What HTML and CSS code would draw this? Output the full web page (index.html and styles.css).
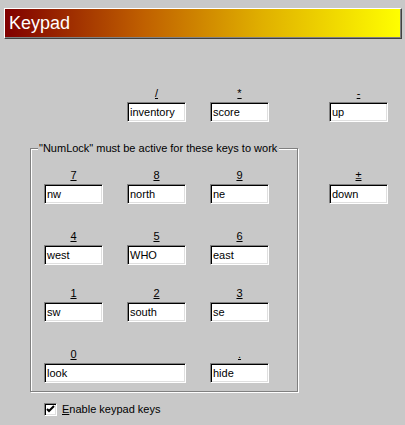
FILE: index.html
```html
<!DOCTYPE html>
<html>
<head>
<meta charset="utf-8">
<link rel="stylesheet" href="styles.css">
</head>
<body>
<div class="header">Keypad</div>
<div class="content">
  <div class="left">
    <div class="toprow">
      <div class="cell c2"><span class="lbl"><u>/</u></span><div class="field">inventory</div></div>
      <div class="cell c3"><span class="lbl"><u>*</u></span><div class="field">score</div></div>
    </div>
    <div class="group">
      <span class="legend">"NumLock" must be active for these keys to work</span>
      <div class="grid">
        <div class="cell"><span class="lbl"><u>7</u></span><div class="field">nw</div></div>
        <div class="cell"><span class="lbl"><u>8</u></span><div class="field">north</div></div>
        <div class="cell"><span class="lbl"><u>9</u></span><div class="field">ne</div></div>
        <div class="cell r4"><span class="lbl"><u>4</u></span><div class="field">west</div></div>
        <div class="cell r4"><span class="lbl"><u>5</u></span><div class="field">WHO</div></div>
        <div class="cell r4"><span class="lbl"><u>6</u></span><div class="field">east</div></div>
        <div class="cell r1"><span class="lbl"><u>1</u></span><div class="field">sw</div></div>
        <div class="cell r1"><span class="lbl"><u>2</u></span><div class="field">south</div></div>
        <div class="cell r1"><span class="lbl"><u>3</u></span><div class="field">se</div></div>
        <div class="cell r0 wide"><span class="lbl lbl-left"><u>0</u></span><div class="field">look</div></div>
        <div class="cell r0 c3"><span class="lbl"><u>.</u></span><div class="field">hide</div></div>
      </div>
    </div>
    <div class="check">
      <span class="box"><svg width="9" height="9" viewBox="0 0 9 9"><path d="M1 4 L3 6 L8 1" fill="none" stroke="#000" stroke-width="2"/></svg></span>
      <span class="check-label"><u>E</u>nable keypad keys</span>
    </div>
  </div>
  <div class="right">
    <div class="cell"><span class="lbl"><u>-</u></span><div class="field">up</div></div>
    <div class="cell down"><span class="lbl"><u>±</u></span><div class="field">down</div></div>
  </div>
</div>
</body>
</html>
```
FILE: styles.css
```css
html, body {
  margin: 0;
  padding: 0;
  background: #c8c8c8;
  font-family: "Liberation Sans", Arial, sans-serif;
  font-size: 11px;
  color: #000;
}
.header {
  margin: 8px 3px 0 4px;
  height: 29px;
  border-top: 1px solid #fff;
  border-left: 1px solid #fff;
  border-right: 1px solid #404040;
  border-bottom: 1px solid #404040;
  box-shadow: inset -1px -1px 0 #808080;
  background: linear-gradient(to right, #800000, #c06000 35%, #e0b000 65%, #ffff00);
  color: #fff;
  font-size: 18px;
  line-height: 29px;
  padding-left: 4px;
}
.content {
  display: flex;
  padding-left: 30px;
  margin-top: 47px;
}
.left {
  width: 268px;
}
.cell {
  display: flex;
  flex-direction: column;
  width: 59px;
}
.lbl {
  display: block;
  height: 14px;
  line-height: 14px;
  text-align: center;
  margin-bottom: 2px;
}
.lbl-left {
  width: 59px;
}
.field {
  box-sizing: border-box;
  height: 20px;
  width: 100%;
  background: #fff;
  border: 1px solid;
  border-color: #808080 #fff #fff #808080;
  box-shadow: inset 1px 1px 0 #000, inset -1px -1px 0 #dfdfdf;
  padding: 0 0 0 2px;
  line-height: 18px;
  white-space: nowrap;
  overflow: hidden;
}
.toprow {
  display: grid;
  grid-template-columns: 59px 59px 59px;
  column-gap: 24px;
  padding-left: 14px;
}
.c2 { grid-column: 2; }
.c3 { grid-column: 3; }
.group {
  margin-top: 26px;
  border: 1px solid #808080;
  box-shadow: 1px 1px 0 #fff, inset 1px 1px 0 #fff;
  padding: 0 0 8px 13px;
}
.legend {
  display: block;
  width: fit-content;
  margin-top: -8px;
  margin-left: -6px;
  padding: 0 2px 0 1px;
  height: 14px;
  line-height: 14px;
  background: #c8c8c8;
}
.grid {
  display: grid;
  grid-template-columns: 59px 59px 59px;
  column-gap: 24px;
  margin-top: 13px;
}
.r4 { margin-top: 25px; }
.r1 { margin-top: 21px; }
.r0 { margin-top: 25px; }
.wide {
  grid-column: 1 / span 2;
  width: auto;
}
.check {
  display: flex;
  align-items: center;
  margin-top: 10px;
  padding-left: 14px;
}
.box {
  box-sizing: border-box;
  width: 13px;
  height: 13px;
  background: #fff;
  border: 1px solid;
  border-color: #808080 #fff #fff #808080;
  box-shadow: inset 1px 1px 0 #000, inset -1px -1px 0 #dfdfdf;
  display: flex;
  align-items: center;
  justify-content: center;
}
.box svg { display: block; }
.check-label {
  margin-left: 5px;
  line-height: 14px;
}
.right {
  margin-left: 31px;
}
.down {
  margin-top: 46px;
}
```
